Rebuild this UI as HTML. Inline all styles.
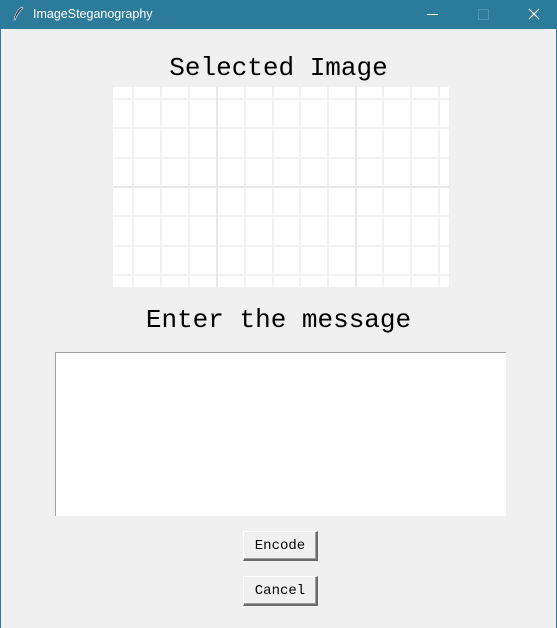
<!DOCTYPE html>
<html><head><style>
body{margin:0;width:557px;height:628px;background:#f0f0f0;position:relative;overflow:hidden;font-family:"Liberation Mono",monospace;}
.tb{position:absolute;left:0;top:0;width:557px;height:29px;background:#2d7b9a;color:#fff;font-family:"Liberation Sans",sans-serif;font-size:12.5px;}
.bl{position:absolute;top:29px;bottom:0;width:1px;background:#2d7b9a}
.t{position:absolute;left:0;width:557px;text-align:center;font-size:26px;color:#000;line-height:30px}
.btn{position:absolute;left:243px;width:75px;height:30px;background:#f0f0f0;border-top:1px solid #fff;border-left:1px solid #fff;border-right:2px solid #6a6a6a;border-bottom:2px solid #6a6a6a;box-sizing:border-box;font-size:14px;text-align:center;line-height:28px;box-shadow:inset -1px -1px 0 #a0a0a0}
</style></head><body>
<div class="tb">
<svg style="position:absolute;left:12px;top:6px" width="12" height="16" viewBox="0 0 12 16"><path d="M10 1 C6 3 3 8 2 14 L3 14 C5 9 8 5 11 2 Z" fill="#1a2a4a" stroke="#fff" stroke-width=".6"/></svg>
<span style="position:absolute;left:33px;top:7px">ImageSteganography</span>
<div style="position:absolute;left:427px;top:14px;width:11px;height:1px;background:#fff"></div>
<div style="position:absolute;left:478px;top:9px;width:9px;height:9px;border:1px solid #4f93ad"></div>
<svg style="position:absolute;left:528px;top:8px" width="12" height="12"><path d="M1 1L11 11M11 1L1 11" stroke="#fff" stroke-width="1.2"/></svg>
</div>
<div class="bl" style="left:0"></div><div class="bl" style="right:0"></div>
<div class="t" style="top:53px">Selected Image</div>
<svg style="position:absolute;left:113px;top:87px" width="336" height="200">
<rect width="336" height="200" fill="#fff"/>
<g stroke="#f2f2f2" stroke-width="2">
<path d="M20 0V200M48 0V200M76 0V200M132 0V200M160 0V200M187 0V200M215 0V200M270 0V200M298 0V200M326 0V200"/>
<path d="M0 12H336M0 41H336M0 71H336M0 129H336M0 159H336M0 188H336"/>
</g>
<g stroke="#e8e8e8" stroke-width="2"><path d="M104 0V200M243 0V200M0 100H336"/></g>
</svg>
<div class="t" style="top:305px">Enter the message</div>
<div style="position:absolute;left:55px;top:352px;width:451px;height:164px;background:#fff;border-top:1px solid #a0a0a0;border-left:1px solid #a0a0a0;box-sizing:border-box"></div>
<div class="btn" style="top:531px">Encode</div>
<div class="btn" style="top:576px">Cancel</div>
</body></html>
